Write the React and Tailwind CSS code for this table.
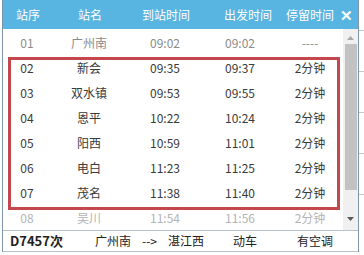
import React from "react";

const rows = [
  ["01", "广州南", "09:02", "09:02", "----"],
  ["02", "新会", "09:35", "09:37", "2分钟"],
  ["03", "双水镇", "09:53", "09:55", "2分钟"],
  ["04", "恩平", "10:22", "10:24", "2分钟"],
  ["05", "阳西", "10:59", "11:01", "2分钟"],
  ["06", "电白", "11:23", "11:25", "2分钟"],
  ["07", "茂名", "11:38", "11:40", "2分钟"],
  ["08", "吴川", "11:54", "11:56", "2分钟"],
];

export default function App() {
  return (
    <div
      className="relative w-[364px] h-[255px] overflow-hidden bg-white"
      style={{ fontFamily: '"Noto Sans CJK SC", "Noto Sans", sans-serif' }}
    >
      <div className="flex h-[252px]">
        <div className="w-[2px] bg-white" />
        <div className="relative flex w-[357px] flex-col border-x border-[#7d95ad] bg-white">
          {/* header */}
          <div className="flex h-[29px] items-center bg-[#58b4e1] text-[12px] text-white">
            <div className="flex w-[50px] justify-center whitespace-nowrap">站序</div>
            <div className="flex w-[74px] justify-center whitespace-nowrap">站名</div>
            <div className="flex w-[78px] justify-center whitespace-nowrap">到站时间</div>
            <div className="flex w-[86px] justify-center whitespace-nowrap">出发时间</div>
            <div className="flex w-[38px] justify-center whitespace-nowrap">停留时间</div>
            <div className="ml-[11px] text-[15px] font-bold leading-none">✕</div>
          </div>
          {/* body */}
          <div className="flex h-[201px] overflow-hidden">
            <div className="flex w-[340px] flex-col pt-[1px] text-[12px]">
              {rows.map((r, i) => (
                <div
                  key={r[0]}
                  className={
                    "flex h-[25px] shrink-0 items-center " +
                    (i === 0 ? "text-[#8a8a8a]" : i === 7 ? "text-[#b4b4b4]" : "text-[#3a3a3a]")
                  }
                >
                  <div className="flex w-[48px] justify-center">{r[0]}</div>
                  <div className="flex w-[76px] justify-center">{r[1]}</div>
                  <div className="flex w-[76px] justify-center">{r[2]}</div>
                  <div className="flex w-[74px] justify-center">{r[3]}</div>
                  <div className="flex w-[66px] justify-center">{r[4]}</div>
                </div>
              ))}
            </div>
            {/* scrollbar */}
            <div className="flex w-[15px] flex-col items-center bg-[#f0f0f0]">
              <svg width="9" height="6" viewBox="0 0 9 6" className="mt-[6px]">
                <path d="M4.5 1 L8 5 L1 5 Z" fill="#a8a8a8" />
              </svg>
              <div className="mt-[3px] h-[146px] w-[12px] bg-[#c2c2c2]" />
              <div className="flex-1" />
              <svg width="9" height="6" viewBox="0 0 9 6" className="mb-[8px]">
                <path d="M1 1 L8 1 L4.5 5 Z" fill="#5a5a5a" />
              </svg>
            </div>
          </div>
          {/* footer */}
          <div className="flex h-[22px] items-center border-y border-[#b9c3cc] text-[12px] text-[#222]">
            <div className="ml-[7px] w-[85px] text-[13px] font-bold">D7457次</div>
            <div>广州南</div>
            <div className="ml-[11px]">--&gt;</div>
            <div className="ml-[11px]">湛江西</div>
            <div className="ml-[29px]">动车</div>
            <div className="ml-[40px]">有空调</div>
          </div>
          {/* annotation box */}
          <div className="pointer-events-none absolute left-[5px] top-[57px] h-[153px] w-[332px] border-[3px] border-[#c4484b]" />
        </div>
        <div className="flex flex-1 flex-col bg-white">
          <div className="mt-[30px] h-px w-full bg-[#c8c8c8]" />
          <div className="mt-[40px] h-px w-full bg-[#c8c8c8]" />
          <div className="mt-[40px] h-px w-full bg-[#c8c8c8]" />
          <div className="mt-[40px] h-px w-full bg-[#c8c8c8]" />
          <div className="mt-[40px] h-px w-full bg-[#c8c8c8]" />
        </div>
      </div>
    </div>
  );
}
